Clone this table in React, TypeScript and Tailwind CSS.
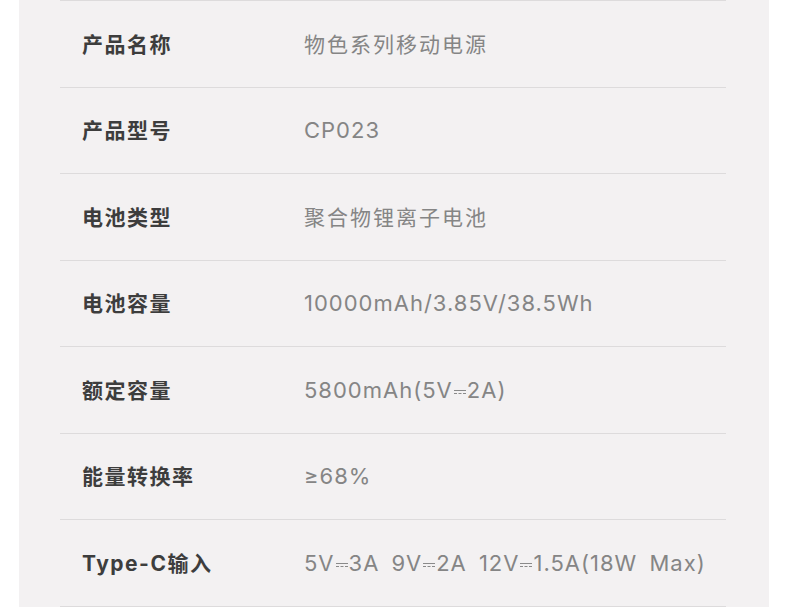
import React from 'react';

const DC: React.FC = () => (
  <span className="inline-flex flex-col justify-center w-[12px] h-[10px] mx-[1px] align-middle gap-[2px]">
    <span className="block h-px bg-[#8a8a8a]" />
    <span className="block h-px border-t border-dashed border-[#8a8a8a]" />
  </span>
);

const rows: { label: string; value: React.ReactNode; latin?: boolean; wide?: boolean }[] = [
  { label: '产品名称', value: '物色系列移动电源' },
  { label: '产品型号', value: 'CP023', latin: true },
  { label: '电池类型', value: '聚合物锂离子电池' },
  { label: '电池容量', value: '10000mAh/3.85V/38.5Wh', latin: true },
  {
    label: '额定容量',
    latin: true,
    value: (
      <>
        5800mAh(5V<DC />2A)
      </>
    ),
  },
  { label: '能量转换率', value: '≥68%', latin: true },
  {
    label: 'Type-C输入',
    latin: true,
    wide: true,
    value: (
      <>
        5V<DC />3A 9V<DC />2A 12V<DC />1.5A(18W Max)
      </>
    ),
  },
];

const App: React.FC = () => {
  return (
    <div className="w-[790px] h-[607px] bg-white overflow-hidden">
      <div className="ml-[19px] w-[750px] h-full bg-[#f3f1f2] pl-[41px] pr-[43px] font-['Inter','Noto_Sans_CJK_SC',sans-serif]">
        {rows.map((row, i) => (
          <div
            key={i}
            className="h-[86.5px] border-t border-[#dddbdc] flex items-center pt-px"
          >
            <div className="w-[244px] pl-[22px] text-[21px] font-bold text-[#3d3d3d] tracking-[1.5px]">
              {row.label}
            </div>
            <div
              className={
                row.wide
                  ? 'text-[22px] text-[#858585] tracking-[1px] [word-spacing:5px] whitespace-nowrap'
                  : row.latin
                    ? 'text-[22px] text-[#858585] tracking-[1px] whitespace-nowrap'
                    : 'text-[21px] text-[#858585] tracking-[2px] whitespace-nowrap'
              }
            >
              {row.value}
            </div>
          </div>
        ))}
        <div className="border-t border-[#dddbdc]" />
      </div>
    </div>
  );
};

export default App;
